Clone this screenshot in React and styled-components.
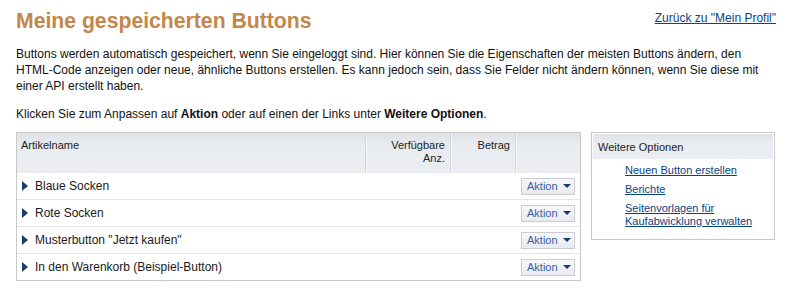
import React from "react";
import styled, { createGlobalStyle } from "styled-components";

const Global = createGlobalStyle`
  html, body { margin: 0; padding: 0; background: #fff; }
  body { font-family: "Liberation Sans", Arial, sans-serif; color: #111; }
`;

const Page = styled.div`
  padding: 8px 17px 0 16px;
  width: 793px;
  box-sizing: border-box;
`;

const TitleRow = styled.div`
  display: flex;
  justify-content: space-between;
  align-items: flex-start;
`;

const Title = styled.h1`
  margin: 0;
  font-size: 21.2px;
  line-height: 26px;
  font-weight: bold;
  color: #c4874a;
`;

const TopLink = styled.a`
  margin-top: 3px;
  font-size: 12px;
  line-height: 14px;
  color: #084482;
  text-decoration: underline;
`;

const Para = styled.p`
  margin: 12px 0 0;
  width: 752px;
  font-size: 12px;
  line-height: 16px;
`;

const Content = styled.div`
  display: flex;
  align-items: flex-start;
  gap: 10px;
  margin-top: 10px;
`;

const Table = styled.div`
  width: 565px;
  box-sizing: border-box;
  border: 1px solid #c9c9c9;
`;

const cols = "348px 85px 65px 65px";

const HeadRow = styled.div`
  display: grid;
  grid-template-columns: ${cols};
  height: 40px;
  background: linear-gradient(#dfe2e7, #e9ecf0 35%, #eaedf1);
`;

const HeadCell = styled.div`
  box-sizing: border-box;
  padding: 6px 5px 0 ${(p) => (p.$first ? 4 : 5)}px;
  font-size: 11px;
  line-height: 13px;
  color: #222;
  text-align: ${(p) => p.$align || "left"};
  border-left: ${(p) => (p.$first ? "none" : "1px solid #d3d6dc")};
  box-shadow: ${(p) => (p.$first ? "none" : "inset 1px 0 0 #f5f6f8")};
`;

const Row = styled.div`
  display: flex;
  align-items: center;
  justify-content: space-between;
  height: 26px;
  padding: 0 5px 0 5px;
  border-top: ${(p) => (p.$first ? "none" : "1px solid #e6e6e6")};
`;

const Name = styled.div`
  display: flex;
  align-items: center;
  gap: 7px;
  font-size: 12px;
  color: #1a1a1a;
`;

const Arrow = styled.span`
  display: inline-block;
  width: 0;
  height: 0;
  border-top: 5px solid transparent;
  border-bottom: 5px solid transparent;
  border-left: 6px solid #1d3c6e;
`;

const ActionButton = styled.button`
  display: flex;
  align-items: center;
  gap: 5px;
  height: 17px;
  width: 54px;
  box-sizing: border-box;
  padding: 0 0 0 5px;
  border: 1px solid #c9cdd3;
  border-radius: 0;
  background: linear-gradient(#f7f8fa, #e8eaee);
  font-family: "Liberation Sans", Arial, sans-serif;
  font-size: 11px;
  line-height: 13px;
  color: #3b5ca6;
  cursor: pointer;
`;

const Caret = styled.span`
  display: inline-block;
  width: 0;
  height: 0;
  border-left: 4px solid transparent;
  border-right: 4px solid transparent;
  border-top: 4px solid #123a72;
`;

const Side = styled.div`
  width: 184px;
  box-sizing: border-box;
  border: 1px solid #c9c9c9;
  padding: 1px 1px 11px;
`;

const SideHead = styled.div`
  height: 25px;
  padding-left: 5px;
  display: flex;
  align-items: center;
  font-size: 11px;
  color: #222;
  background: linear-gradient(#dfe2e7, #e9ecf0 35%, #eaedf1);
`;

const LinkList = styled.ul`
  list-style: none;
  margin: 0;
  padding: 5px 14px 0 32px;
  display: flex;
  flex-direction: column;
  gap: 6px;
`;

const LinkItem = styled.li`
  font-size: 11px;
  line-height: 13px;
`;

const SideLink = styled.a`
  color: #084482;
  text-decoration: underline;
`;

const items = [
  "Blaue Socken",
  "Rote Socken",
  'Musterbutton "Jetzt kaufen"',
  "In den Warenkorb (Beispiel-Button)",
];

export default function App() {
  return (
    <Page>
      <Global />
      <TitleRow>
        <Title>Meine gespeicherten Buttons</Title>
        <TopLink href="#">Zurück zu "Mein Profil"</TopLink>
      </TitleRow>
      <Para>
        Buttons werden automatisch gespeichert, wenn Sie eingeloggt sind. Hier können Sie die
        Eigenschaften der meisten Buttons ändern, den HTML-Code anzeigen oder neue, ähnliche
        Buttons erstellen. Es kann jedoch sein, dass Sie Felder nicht ändern können, wenn Sie
        diese mit einer API erstellt haben.
      </Para>
      <Para>
        Klicken Sie zum Anpassen auf <b>Aktion</b> oder auf einen der Links unter{" "}
        <b>Weitere Optionen</b>.
      </Para>
      <Content>
        <Table>
          <HeadRow>
            <HeadCell $first>Artikelname</HeadCell>
            <HeadCell $align="right">
              Verfügbare
              <br />
              Anz.
            </HeadCell>
            <HeadCell $align="right">Betrag</HeadCell>
            <HeadCell />
          </HeadRow>
          {items.map((name, i) => (
            <Row key={name} $first={i === 0}>
              <Name>
                <Arrow />
                {name}
              </Name>
              <ActionButton>
                Aktion
                <Caret />
              </ActionButton>
            </Row>
          ))}
        </Table>
        <Side>
          <SideHead>Weitere Optionen</SideHead>
          <LinkList>
            <LinkItem>
              <SideLink href="#">Neuen Button erstellen</SideLink>
            </LinkItem>
            <LinkItem>
              <SideLink href="#">Berichte</SideLink>
            </LinkItem>
            <LinkItem>
              <SideLink href="#">Seitenvorlagen für Kaufabwicklung verwalten</SideLink>
            </LinkItem>
          </LinkList>
        </Side>
      </Content>
    </Page>
  );
}
